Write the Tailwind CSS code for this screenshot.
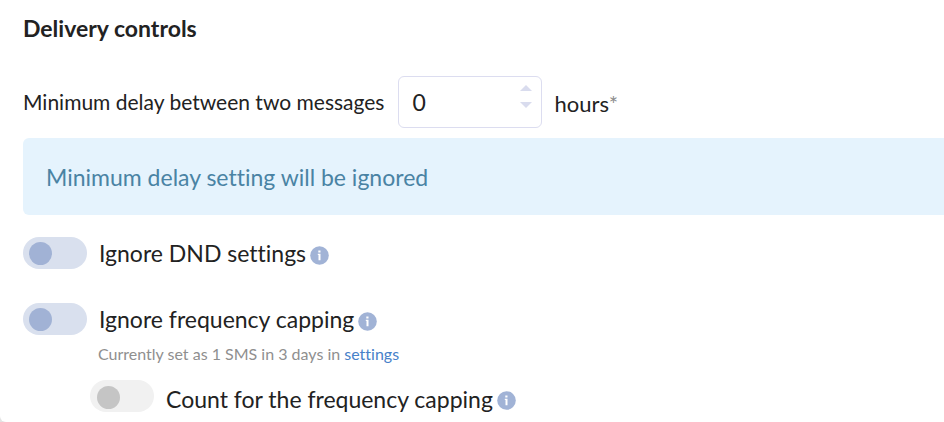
<!DOCTYPE html>
<html lang="en">
  <head>
    <meta charset="UTF-8" />
    <meta name="viewport" content="width=device-width, initial-scale=1.0" />
    <title>Delivery controls</title>
    <script src="https://cdn.jsdelivr.net/npm/@tailwindcss/browser@4"></script>
  </head>
  <body class="bg-[#e3e3e3] font-['Lato',sans-serif] text-[23px] leading-8 text-[#222] antialiased [font-variant-ligatures:none]">
    <main class="min-h-screen rounded-bl-md bg-white pl-[23px] pt-3">
      <h2 class="font-bold">Delivery controls</h2>

      <div class="mt-8 flex items-center">
        <label for="delay" class="text-[21px]">Minimum delay between two messages</label>
        <div class="relative ml-[14px] w-36">
          <input id="delay" type="text" inputmode="numeric" value="0" class="h-[52px] w-full rounded-md border border-[#dcddf0] bg-white px-[13px] outline-none" />
          <div class="absolute right-[10px] top-[9px] flex flex-col gap-[11px]">
            <button type="button" aria-label="Increase" class="block">
              <svg class="block" width="12" height="6" viewBox="0 0 12 6" fill="#d9dcee"><path d="M6 0l6 6H0z" /></svg>
            </button>
            <button type="button" aria-label="Decrease" class="block">
              <svg class="block" width="12" height="6" viewBox="0 0 12 6" fill="#d9dcee"><path d="M0 0h12L6 6z" /></svg>
            </button>
          </div>
        </div>
        <span class="ml-3 pt-1 text-[22px]">hours<span class="text-[#8c8c8c]">*</span></span>
      </div>

      <p class="mt-[10px] rounded-l-md bg-[#e5f3fd] pt-[23px] pb-[21px] pl-[23px] leading-[33px] text-[#4a83a4]">Minimum delay setting will be ignored</p>

      <div class="mt-[22px] flex items-center">
        <input id="dnd" type="checkbox" role="switch" class="h-8 w-16 shrink-0 appearance-none rounded-full bg-[#d9e0ee] before:ml-[6px] before:mt-[5px] before:block before:size-[23px] before:rounded-full before:bg-[#a1b2d5]" />
        <label for="dnd" class="ml-3">Ignore DND settings</label>
        <svg class="ml-1 mt-1" width="19" height="19" viewBox="0 0 19 19"><circle cx="9.500" cy="9.500" r="9.300" fill="#a1b3d6" /><path d="M8.300 4.500h2.200v2H8.300zM7.800 7.700h2.700v6.500H8.500V9h-.7z" fill="#fff" /></svg>
      </div>

      <div class="mt-[34px] flex items-center">
        <input id="cap" type="checkbox" role="switch" class="h-8 w-16 shrink-0 appearance-none rounded-full bg-[#d9e0ee] before:ml-[6px] before:mt-[5px] before:block before:size-[23px] before:rounded-full before:bg-[#a1b2d5]" />
        <label for="cap" class="ml-3">Ignore frequency capping</label>
        <svg class="ml-1 mt-1" width="19" height="19" viewBox="0 0 19 19"><circle cx="9.500" cy="9.500" r="9.300" fill="#a1b3d6" /><path d="M8.300 4.500h2.200v2H8.300zM7.800 7.700h2.700v6.500H8.500V9h-.7z" fill="#fff" /></svg>
      </div>
      <p class="ml-[75px] mt-[7px] text-base leading-6 text-[#8f8f8f]">Currently set as 1 SMS in 3 days in <a href="#" class="text-[#4781c9]">settings</a></p>

      <div class="ml-[67px] mt-[14px] flex">
        <input id="count" type="checkbox" role="switch" disabled class="h-8 w-16 shrink-0 appearance-none rounded-full bg-[#f1f1f1] before:ml-[7px] before:mt-[6px] before:block before:size-[23px] before:rounded-full before:bg-[#c5c5c5]" />
        <label for="count" class="ml-3 pt-[3px]">Count for the frequency capping</label>
        <svg class="ml-1 mt-[11px]" width="19" height="19" viewBox="0 0 19 19"><circle cx="9.500" cy="9.500" r="9.300" fill="#a1b3d6" /><path d="M8.300 4.500h2.200v2H8.300zM7.800 7.700h2.700v6.500H8.500V9h-.7z" fill="#fff" /></svg>
      </div>
    </main>
  </body>
</html>
